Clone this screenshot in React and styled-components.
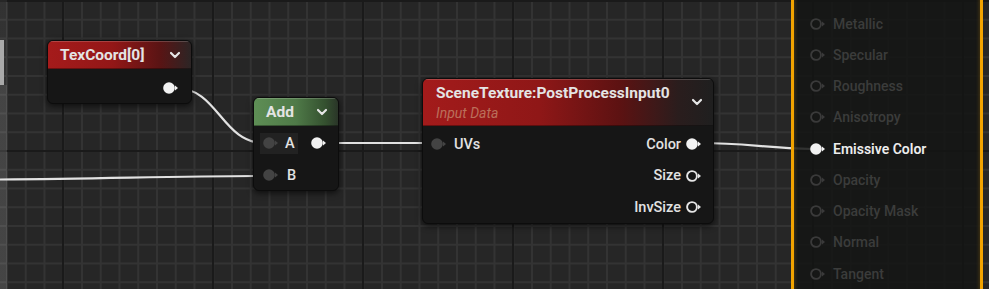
import React from "react";
import styled, { createGlobalStyle } from "styled-components";

const GlobalStyle = createGlobalStyle`
  html, body {
    margin: 0;
    padding: 0;
    background: #262626;
  }
  body {
    font-family: "Roboto", "Liberation Sans", sans-serif;
  }
`;

const Canvas = styled.div`
  position: relative;
  width: 989px;
  height: 289px;
  overflow: hidden;
  background-color: #262626;
  background-image: linear-gradient(90deg, #1a1a1a 2px, transparent 2px),
    linear-gradient(180deg, #1a1a1a 2px, transparent 2px),
    linear-gradient(90deg, #333333 2px, transparent 2px),
    linear-gradient(180deg, #333333 2px, transparent 2px);
  background-size: 150px 150px, 150px 150px, 18.75px 18.75px, 18.75px 18.75px;
  background-position: 62px 0, 0 0, 6px 0, 0 0;
`;

const Wires = styled.svg`
  position: absolute;
  left: 0;
  top: 0;
  width: 989px;
  height: 289px;
  z-index: 1;
  pointer-events: none;
`;

const EdgeStrip = styled.div`
  position: absolute;
  left: 0;
  top: 0;
  width: 7px;
  height: 289px;
  background: linear-gradient(
    180deg,
    rgba(255, 255, 255, 0.06) 0,
    rgba(255, 255, 255, 0.06) 85px,
    rgba(255, 255, 255, 0.14) 85px
  );
  z-index: 0;
`;

const EdgeTab = styled.div`
  margin-top: 40px;
  width: 4px;
  height: 45px;
  background: #a9a9a9;
`;

const Node = styled.div`
  position: absolute;
  left: ${(p) => p.$x}px;
  top: ${(p) => p.$y}px;
  width: ${(p) => p.$w}px;
  display: flex;
  flex-direction: column;
  background: #161616;
  border: 1px solid #0c0c0c;
  border-radius: 6px;
  box-shadow: 0 2px 6px rgba(0, 0, 0, 0.65);
  z-index: 2;
  overflow: hidden;
`;

const Header = styled.div`
  height: ${(p) => p.$h}px;
  display: flex;
  align-items: ${(p) => (p.$tall ? "flex-start" : "center")};
  justify-content: space-between;
  padding: ${(p) => (p.$tall ? "5px 10px 0 13px" : "0 10px 0 12px")};
  box-sizing: border-box;
  background: ${(p) => p.$bg};
  box-shadow: inset 0 1px 0 rgba(255, 255, 255, 0.18),
    inset 0 -1px 0 rgba(0, 0, 0, 0.35);
`;

const TitleBlock = styled.div`
  display: flex;
  flex-direction: column;
`;

const Title = styled.div`
  font-size: 15.5px;
  font-weight: 700;
  color: #e4e4e4;
  line-height: 18px;
  white-space: nowrap;
`;

const Subtitle = styled.div`
  font-size: 14px;
  font-style: italic;
  color: #bb6f5b;
  line-height: 16px;
  margin-top: 3px;
`;

const Chevron = styled.svg`
  width: 12px;
  height: 8px;
  flex: none;
  margin-top: ${(p) => p.$drop || 0}px;
`;

const Body = styled.div`
  display: flex;
  flex-direction: column;
  gap: ${(p) => p.$gap || 0}px;
  padding: ${(p) => p.$pad};
`;

const Row = styled.div`
  height: 20px;
  display: flex;
  align-items: center;
  justify-content: ${(p) => p.$justify || "space-between"};
`;

const PinGroup = styled.div`
  display: flex;
  align-items: center;
  gap: ${(p) => p.$gap || 6}px;
  height: 21px;
  padding-right: ${(p) => p.$padR || 0}px;
  background: ${(p) => (p.$hover ? "#222222" : "transparent")};
  margin-left: ${(p) => (p.$hover ? -3 : 0)}px;
  padding-left: ${(p) => (p.$hover ? 3 : 0)}px;
`;

const Label = styled.span`
  font-size: 14.5px;
  font-weight: 500;
  color: #e2e2e2;
  white-space: nowrap;
`;

const ResultNode = styled.div`
  position: absolute;
  left: 791px;
  top: -20px;
  width: 192px;
  height: 330px;
  box-sizing: border-box;
  border: 3px solid #f2a300;
  border-radius: 6px;
  background: rgba(20, 21, 20, 0.86);
  box-shadow: inset 0 0 4px rgba(242, 163, 0, 0.35);
  z-index: 2;
  display: flex;
  flex-direction: column;
  padding: 25px 0 0 16px;
`;

const ResultRow = styled.div`
  height: 31.25px;
  display: flex;
  align-items: center;
  gap: 7px;
`;

const ResultLabel = styled.span`
  font-size: 14px;
  font-weight: ${(p) => (p.$active ? 600 : 500)};
  color: ${(p) => (p.$active ? "#ececec" : "#3b3c3b")};
  white-space: nowrap;
`;

const ChevronIcon = ({ drop }) => (
  <Chevron viewBox="0 0 12 8" $drop={drop}>
    <path
      d="M2 2 L6 6 L10 2"
      fill="none"
      stroke="#e6e6e6"
      strokeWidth="2.2"
      strokeLinecap="round"
      strokeLinejoin="round"
    />
  </Chevron>
);

// kinds: "out" (white filled), "ring" (white outline), "in" (gray dot), "off" (dim ring)
const pinColors = {
  out: "#f2f2f2",
  ring: "#e6e6e6",
  in: "#434343",
  off: "#3a3a3a",
};

const Pin = ({ kind }) => {
  const c = pinColors[kind];
  const filled = kind === "out" || kind === "in";
  return (
    <svg width="16" height="14" viewBox="0 0 16 14" style={{ flex: "none" }}>
      {filled ? (
        <circle cx="6" cy="7" r="5.8" fill={c} />
      ) : (
        <circle cx="6" cy="7" r="4.9" fill="none" stroke={c} strokeWidth="1.9" />
      )}
      <path d="M12 4.4 L15 7 L12 9.6 Z" fill={c} />
    </svg>
  );
};

const resultPins = [
  { name: "Metallic" },
  { name: "Specular" },
  { name: "Roughness" },
  { name: "Anisotropy" },
  { name: "Emissive Color", active: true },
  { name: "Opacity" },
  { name: "Opacity Mask" },
  { name: "Normal" },
  { name: "Tangent" },
];

const wireStyle = {
  fill: "none",
  stroke: "#e2e2e2",
  strokeWidth: 2.2,
  strokeLinecap: "round",
};

export default function App() {
  return (
    <>
      <GlobalStyle />
      <Canvas>
        <EdgeStrip>
          <EdgeTab />
        </EdgeStrip>

        <Wires viewBox="0 0 989 289">
          <path d="M176 88 C 218 88, 222 143, 264 143" style={wireStyle} />
          <path d="M323 143 L 432 143" style={wireStyle} />
          <path d="M-20 179.6 C 90 179.4, 170 176, 264 176" style={wireStyle} />
          <path d="M700 143 C 745 143, 765 148, 812 149" style={wireStyle} />
        </Wires>

        <Node $x={47} $y={40} $w={143}>
          <Header
            $h={28}
            $bg="linear-gradient(90deg, #a51b1b 0%, #931717 45%, #5a1414 78%, #2c2525 100%)"
          >
            <Title>TexCoord[0]</Title>
            <ChevronIcon />
          </Header>
          <Body $pad="9px 12px 5px 12px">
            <Row $justify="flex-end">
              <Pin kind="out" />
            </Row>
          </Body>
        </Node>

        <Node $x={253} $y={97} $w={84}>
          <Header
            $h={28}
            $bg="linear-gradient(90deg, #5e8e55 0%, #4f7a48 50%, #34502f 85%, #2a3528 100%)"
          >
            <Title>Add</Title>
            <ChevronIcon />
          </Header>
          <Body $pad="7px 11px 5px 9px" $gap={12}>
            <Row>
              <PinGroup $hover $padR={3}>
                <Pin kind="in" />
                <Label>A</Label>
              </PinGroup>
              <Pin kind="out" />
            </Row>
            <Row>
              <PinGroup $gap={8}>
                <Pin kind="in" />
                <Label>B</Label>
              </PinGroup>
            </Row>
          </Body>
        </Node>

        <Node $x={422} $y={78} $w={290}>
          <Header
            $h={47}
            $tall
            $bg="linear-gradient(90deg, #a31b1b 0%, #8f1717 40%, #5c1212 68%, #2a1d1d 88%, #1f1f1f 100%)"
          >
            <TitleBlock>
              <Title>SceneTexture:PostProcessInput0</Title>
              <Subtitle>Input Data</Subtitle>
            </TitleBlock>
            <ChevronIcon drop={14} />
          </Header>
          <Body $pad="8px 11px 6px 8px" $gap={11.5}>
            <Row>
              <PinGroup $gap={7}>
                <Pin kind="in" />
                <Label>UVs</Label>
              </PinGroup>
              <PinGroup $gap={5}>
                <Label>Color</Label>
                <Pin kind="out" />
              </PinGroup>
            </Row>
            <Row $justify="flex-end">
              <PinGroup $gap={5}>
                <Label>Size</Label>
                <Pin kind="ring" />
              </PinGroup>
            </Row>
            <Row $justify="flex-end">
              <PinGroup $gap={5}>
                <Label>InvSize</Label>
                <Pin kind="ring" />
              </PinGroup>
            </Row>
          </Body>
        </Node>

        <ResultNode>
          {resultPins.map((p) => (
            <ResultRow key={p.name}>
              <Pin kind={p.active ? "out" : "off"} />
              <ResultLabel $active={p.active}>{p.name}</ResultLabel>
            </ResultRow>
          ))}
        </ResultNode>
      </Canvas>
    </>
  );
}
